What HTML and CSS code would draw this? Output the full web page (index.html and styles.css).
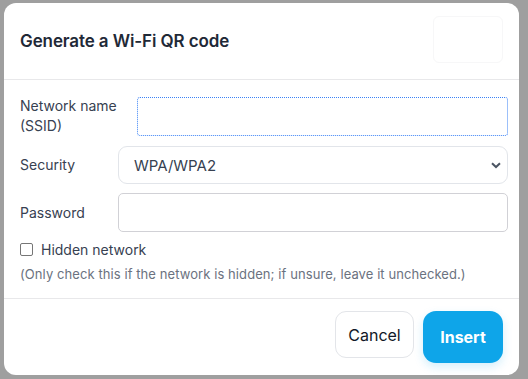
FILE: index.html
```html
<!DOCTYPE html>
<html>
<head>
<meta charset="utf-8">
<link rel="stylesheet" href="styles.css">
</head>
<body>
<div class="backdrop">
  <div class="modal">
    <div class="modal-header">
      <h2 class="title">Generate a Wi-Fi QR code</h2>
      <div class="close-box"></div>
    </div>
    <div class="modal-body">
      <div class="row row-ssid">
        <label class="label label-wrap">Network name (SSID)</label>
        <input class="field field-focus" type="text">
      </div>
      <div class="row">
        <label class="label">Security</label>
        <div class="select">
          <span>WPA/WPA2</span>
          <svg class="chev" width="10" height="7" viewBox="0 0 10 7"><path d="M1 1.2 L5 5 L9 1.2" fill="none" stroke="#4b5563" stroke-width="2"/></svg>
        </div>
      </div>
      <div class="row">
        <label class="label">Password</label>
        <input class="field" type="text">
      </div>
      <div class="check-row">
        <span class="checkbox"></span>
        <span class="check-label">Hidden network</span>
      </div>
      <p class="help">(Only check this if the network is hidden; if unsure, leave it unchecked.)</p>
    </div>
    <div class="modal-footer">
      <button class="btn btn-cancel">Cancel</button>
      <button class="btn btn-insert">Insert</button>
    </div>
  </div>
</div>
</body>
</html>
```
FILE: styles.css
```css
* { box-sizing: border-box; }
html, body { margin: 0; padding: 0; }
body {
  width: 528px;
  height: 379px;
  background: #9f9f9f;
  font-family: Inter, "Noto Sans", sans-serif;
  overflow: hidden;
}
.backdrop {
  padding: 3px 9px 0 4px;
}
.modal {
  width: 515px;
  height: 372px;
  background: #ffffff;
  border-radius: 12px;
  display: flex;
  flex-direction: column;
}
.modal-header {
  height: 77px;
  border-bottom: 1px solid #e8e8ea;
  display: flex;
  align-items: center;
  justify-content: space-between;
  padding: 0 16px 0 16px;
}
.title {
  margin: 0;
  font-size: 17px;
  font-weight: 600;
  color: #1f2937;
  letter-spacing: -0.1px;
}
.close-box {
  width: 70px;
  height: 47px;
  border: 1px solid #f7f7f8;
  border-radius: 6px;
  margin-top: -3px;
}
.modal-body {
  padding: 16px 11px 0 16px;
  height: 219px;
  border-bottom: 1px solid #e8e8ea;
}
.row {
  display: flex;
  align-items: center;
  margin-bottom: 9px;
}
.row-ssid { margin-bottom: 10px; }
.label {
  width: 98px;
  flex: none;
  font-size: 14px;
  color: #374151;
  line-height: 20px;
}
.label-wrap { width: 117px; padding-right: 14px; }
.field {
  flex: 1;
  height: 39px;
  border: 1px solid #d1d1d6;
  border-radius: 5px;
  background: #fff;
  margin: 0;
  font: inherit;
  outline: none;
}
.field-focus {
  border: 1px dotted #3b82f6;
  border-radius: 3px;
}
.select {
  flex: 1;
  height: 38px;
  border: 1px solid #e2e5ea;
  border-radius: 9px;
  display: flex;
  align-items: center;
  justify-content: space-between;
  padding: 0 6px 0 15px;
  font-size: 15px;
  color: #374151;
}
.chev { margin-top: 1px; }
.check-row {
  display: flex;
  align-items: center;
  margin-top: 8px;
  height: 16px;
}
.checkbox {
  width: 13px;
  height: 13px;
  border: 1px solid #767676;
  border-radius: 2px;
  margin-left: 0;
  margin-right: 8px;
}
.check-label {
  font-size: 14px;
  color: #374151;
}
.help {
  margin: 8px 0 0 0;
  font-size: 13px;
  color: #6b7280;
  line-height: 18px;
  letter-spacing: 0.08px;
}
.modal-footer {
  flex: 1;
  display: flex;
  justify-content: flex-end;
  align-items: flex-start;
  padding: 12px 16px 0 0;
  gap: 9px;
}
.btn {
  font-family: Inter, "Noto Sans", sans-serif;
  font-size: 16px;
  border-radius: 11px;
  cursor: pointer;
}
.btn-cancel {
  width: 79px;
  height: 47px;
  background: #fff;
  border: 1px solid #e3e5e9;
  color: #111827;
}
.btn-insert {
  width: 80px;
  height: 52px;
  background: #0ea5e9;
  border: none;
  color: #fff;
  font-weight: 700;
  border-radius: 13px;
  box-shadow: 0 4px 10px rgba(14,165,233,0.18);
}
```
